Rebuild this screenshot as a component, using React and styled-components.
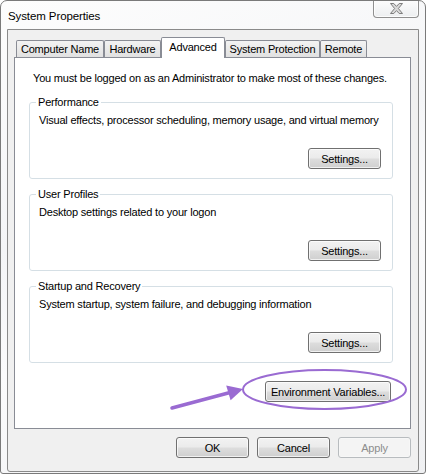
import React from 'react';
import styled, { createGlobalStyle } from 'styled-components';

const GlobalStyle = createGlobalStyle`
  html, body {
    margin: 0;
    padding: 0;
    background: #ffffff;
  }
  body {
    font-family: "Liberation Sans", Arial, sans-serif;
    font-size: 11px;
    color: #000;
  }
`;

const Window = styled.div`
  position: relative;
  width: 426px;
  height: 474px;
  box-sizing: border-box;
  border: 1px solid #7a7a7a;
  border-radius: 7px 7px 3px 3px;
  background: linear-gradient(160deg, #fdfdfd 0%, #f4f5f7 40%, #fbfbfc 60%, #eff0f2 100%);
  display: flex;
  flex-direction: column;
  padding: 0 6px 1px 6px;
  overflow: hidden;
`;

const TitleBar = styled.div`
  height: 28px;
  display: flex;
  justify-content: space-between;
  align-items: flex-start;
`;

const Title = styled.div`
  padding: 8px 0 0 1px;
  font-size: 11.5px;
  line-height: 14px;
  letter-spacing: -0.1px;
  color: #000;
`;

const CloseButton = styled.div`
  width: 46px;
  height: 18px;
  margin-top: -1px;
  box-sizing: border-box;
  border: 1px solid #8f8f8f;
  border-top: none;
  border-radius: 0 0 4px 4px;
  background: linear-gradient(#fdfdfd, #eceef0);
  box-shadow: inset 0 0 0 1px rgba(255, 255, 255, 0.8);
  display: flex;
  align-items: center;
  justify-content: center;
`;

const Client = styled.div`
  flex: 1;
  box-sizing: border-box;
  border: 1px solid #8a8a8a;
  border-radius: 0 0 3px 3px;
  background: #f0f0f0;
  padding: 7px 7px 0 6px;
  display: flex;
  flex-direction: column;
`;

const TabRow = styled.div`
  display: flex;
  align-items: flex-end;
  height: 20px;
  padding-left: 2px;
`;

const Tab = styled.div`
  position: relative;
  box-sizing: border-box;
  width: ${p => p.$w}px;
  height: ${p => (p.$active ? 21 : 17)}px;
  margin-bottom: ${p => (p.$active ? -1 : 0)}px;
  z-index: ${p => (p.$active ? 2 : 0)};
  border: 1px solid #898c95;
  border-bottom: ${p => (p.$active ? 'none' : '0')};
  border-radius: 2px 2px 0 0;
  background: ${p => (p.$active ? '#ffffff' : 'linear-gradient(#f3f3f3, #e1e1e1)')};
  display: flex;
  justify-content: center;
  align-items: ${p => (p.$active ? 'flex-start' : 'center')};
  padding-top: ${p => (p.$active ? 2 : 0)}px;
  letter-spacing: -0.2px;
  line-height: 14px;
  color: #000;
`;

const Panel = styled.div`
  position: relative;
  z-index: 1;
  height: 372px;
  box-sizing: border-box;
  border: 1px solid #898c95;
  background: #ffffff;
  padding: 13px 17px 0 14px;
  display: flex;
  flex-direction: column;
`;

const Notice = styled.div`
  margin-left: 4px;
  line-height: 15px;
  letter-spacing: -0.2px;
`;

const Group = styled.fieldset`
  margin: ${p => p.$top}px 0 0 0;
  padding: 4px 11px 9px 9px;
  border: 1px solid #d5dfe5;
  border-radius: 3px;
  display: flex;
  flex-direction: column;
  min-width: 0;
`;

const Legend = styled.legend`
  margin-left: -3px;
  padding: 0 2px;
  line-height: 14px;
  letter-spacing: -0.2px;
`;

const Description = styled.div`
  line-height: 15px;
  letter-spacing: -0.2px;
`;

const Button = styled.button`
  align-self: flex-end;
  width: ${p => p.$w}px;
  height: 21px;
  margin: ${p => p.$m || '0'};
  padding: 0;
  box-sizing: border-box;
  font-family: "Liberation Sans", Arial, sans-serif;
  font-size: 11px;
  letter-spacing: -0.2px;
  color: ${p => (p.disabled ? '#8d8d8d' : '#000')};
  border: 1px solid ${p => (p.disabled ? '#b8bcbf' : '#707070')};
  border-radius: 3px;
  background: ${p =>
    p.disabled
      ? '#f4f4f4'
      : 'linear-gradient(#f2f2f2 0%, #ebebeb 48%, #dddddd 52%, #cfcfcf 100%)'};
  box-shadow: inset 0 0 0 1px rgba(255, 255, 255, ${p => (p.disabled ? 0.3 : 0.7)});
`;

const Footer = styled.div`
  display: flex;
  justify-content: flex-end;
  gap: 8px;
  margin-top: 8px;
`;

const Overlay = styled.svg`
  position: absolute;
  left: -1px;
  top: -1px;
  width: 426px;
  height: 474px;
  pointer-events: none;
  z-index: 5;
`;

const tabs = [
  { label: 'Computer Name', w: 88 },
  { label: 'Hardware', w: 57 },
  { label: 'Advanced', w: 64, active: true },
  { label: 'System Protection', w: 95 },
  { label: 'Remote', w: 47 },
];

const groups = [
  { title: 'Performance', text: 'Visual effects, processor scheduling, memory usage, and virtual memory', top: 9 },
  { title: 'User Profiles', text: 'Desktop settings related to your logon', top: 8 },
  { title: 'Startup and Recovery', text: 'System startup, system failure, and debugging information', top: 8 },
];

function CloseGlyph() {
  return (
    <svg width="13" height="11" viewBox="0 0 13 11">
      <path
        d="M0.5 0.5 H3.8 L6.5 3.4 L9.2 0.5 H12.5 L8.4 5.5 L12.5 10.5 H9.2 L6.5 7.6 L3.8 10.5 H0.5 L4.6 5.5 Z"
        fill="#d9d9d9"
        stroke="#7d7d7d"
        strokeWidth="1"
        strokeLinejoin="round"
      />
    </svg>
  );
}

export default function App() {
  return (
    <>
      <GlobalStyle />
      <Window>
        <TitleBar>
          <Title>System Properties</Title>
          <CloseButton>
            <CloseGlyph />
          </CloseButton>
        </TitleBar>
        <Client>
          <TabRow>
            {tabs.map(t => (
              <Tab key={t.label} $w={t.w} $active={t.active}>
                {t.label}
              </Tab>
            ))}
          </TabRow>
          <Panel>
            <Notice>You must be logged on as an Administrator to make most of these changes.</Notice>
            {groups.map(g => (
              <Group key={g.title} $top={g.top}>
                <Legend>{g.title}</Legend>
                <Description>{g.text}</Description>
                <Button $w={73} $m="20px 0 0 0">Settings...</Button>
              </Group>
            ))}
            <Button $w={126} $m="18px 2px 0 0">Environment Variables...</Button>
          </Panel>
          <Footer>
            <Button $w={73}>OK</Button>
            <Button $w={73}>Cancel</Button>
            <Button $w={73} disabled>Apply</Button>
          </Footer>
        </Client>
        <Overlay viewBox="0 0 426 474">
          <ellipse cx="324.5" cy="389.5" rx="81.5" ry="19.5" fill="none" stroke="#9a6bd2" strokeWidth="2" />
          <line x1="172" y1="408" x2="231" y2="392.3" stroke="#9a6bd2" strokeWidth="3.5" strokeLinecap="round" />
          <polygon points="226.2,385.6 243,389 230.6,400.2" fill="#9a6bd2" />
        </Overlay>
      </Window>
    </>
  );
}
